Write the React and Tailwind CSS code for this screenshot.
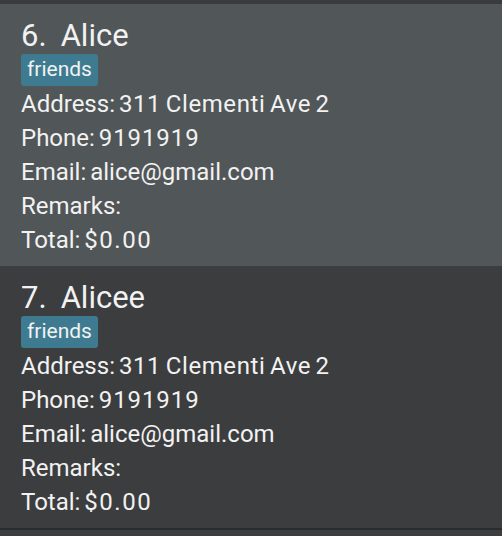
const people = [
  { idx: 6, name: 'Alice', tags: ['friends'], address: '311 Clementi Ave 2', phone: '9191919', email: 'alice@gmail.com', remarks: '', total: '$0.00' },
  { idx: 7, name: 'Alicee', tags: ['friends'], address: '311 Clementi Ave 2', phone: '9191919', email: 'alice@gmail.com', remarks: '', total: '$0.00' },
];

const PersonCard = ({ person, selected }) => (
  <div className={`${selected ? 'bg-[#515658]' : 'bg-[#3c3d3f]'} pl-[21px] pt-[13px] pb-[9px]`}>
    <div className="h-[37px] flex items-center text-[31px] leading-none">
      <span>{person.idx}.</span>
      <span className="ml-[14px]">{person.name}</span>
    </div>
    <div className="flex gap-2 h-[33px] items-start">
      {person.tags.map((t) => (
        <span key={t} className="bg-[#3e7b91] rounded-[3px] h-[32px] px-[6px] flex items-center text-[21px]">{t}</span>
      ))}
    </div>
    <div className="text-[24px] leading-[34px] [word-spacing:-2px]">
      <div>Address: <span className="tracking-[0.6px]">{person.address}</span></div>
      <div>Phone: <span className="tracking-[0.9px]">{person.phone}</span></div>
      <div>Email: {person.email}</div>
      <div>Remarks: {person.remarks}</div>
      <div>Total: <span className="tracking-[1.5px]">{person.total}</span></div>
    </div>
  </div>
);

export default function App() {
  return (
    <div className="w-[502px] h-[536px] bg-[#3c3d3f] text-[#f2f2f2] overflow-hidden" style={{ fontFamily: 'Roboto, sans-serif' }}>
      <div className="h-[4px] bg-[#3a3b3d]" />
      {people.map((p, i) => (
        <PersonCard key={p.idx} person={p} selected={i === 0} />
      ))}
      <div className="h-[2px] bg-[#2a2b2c]" />
    </div>
  );
}
